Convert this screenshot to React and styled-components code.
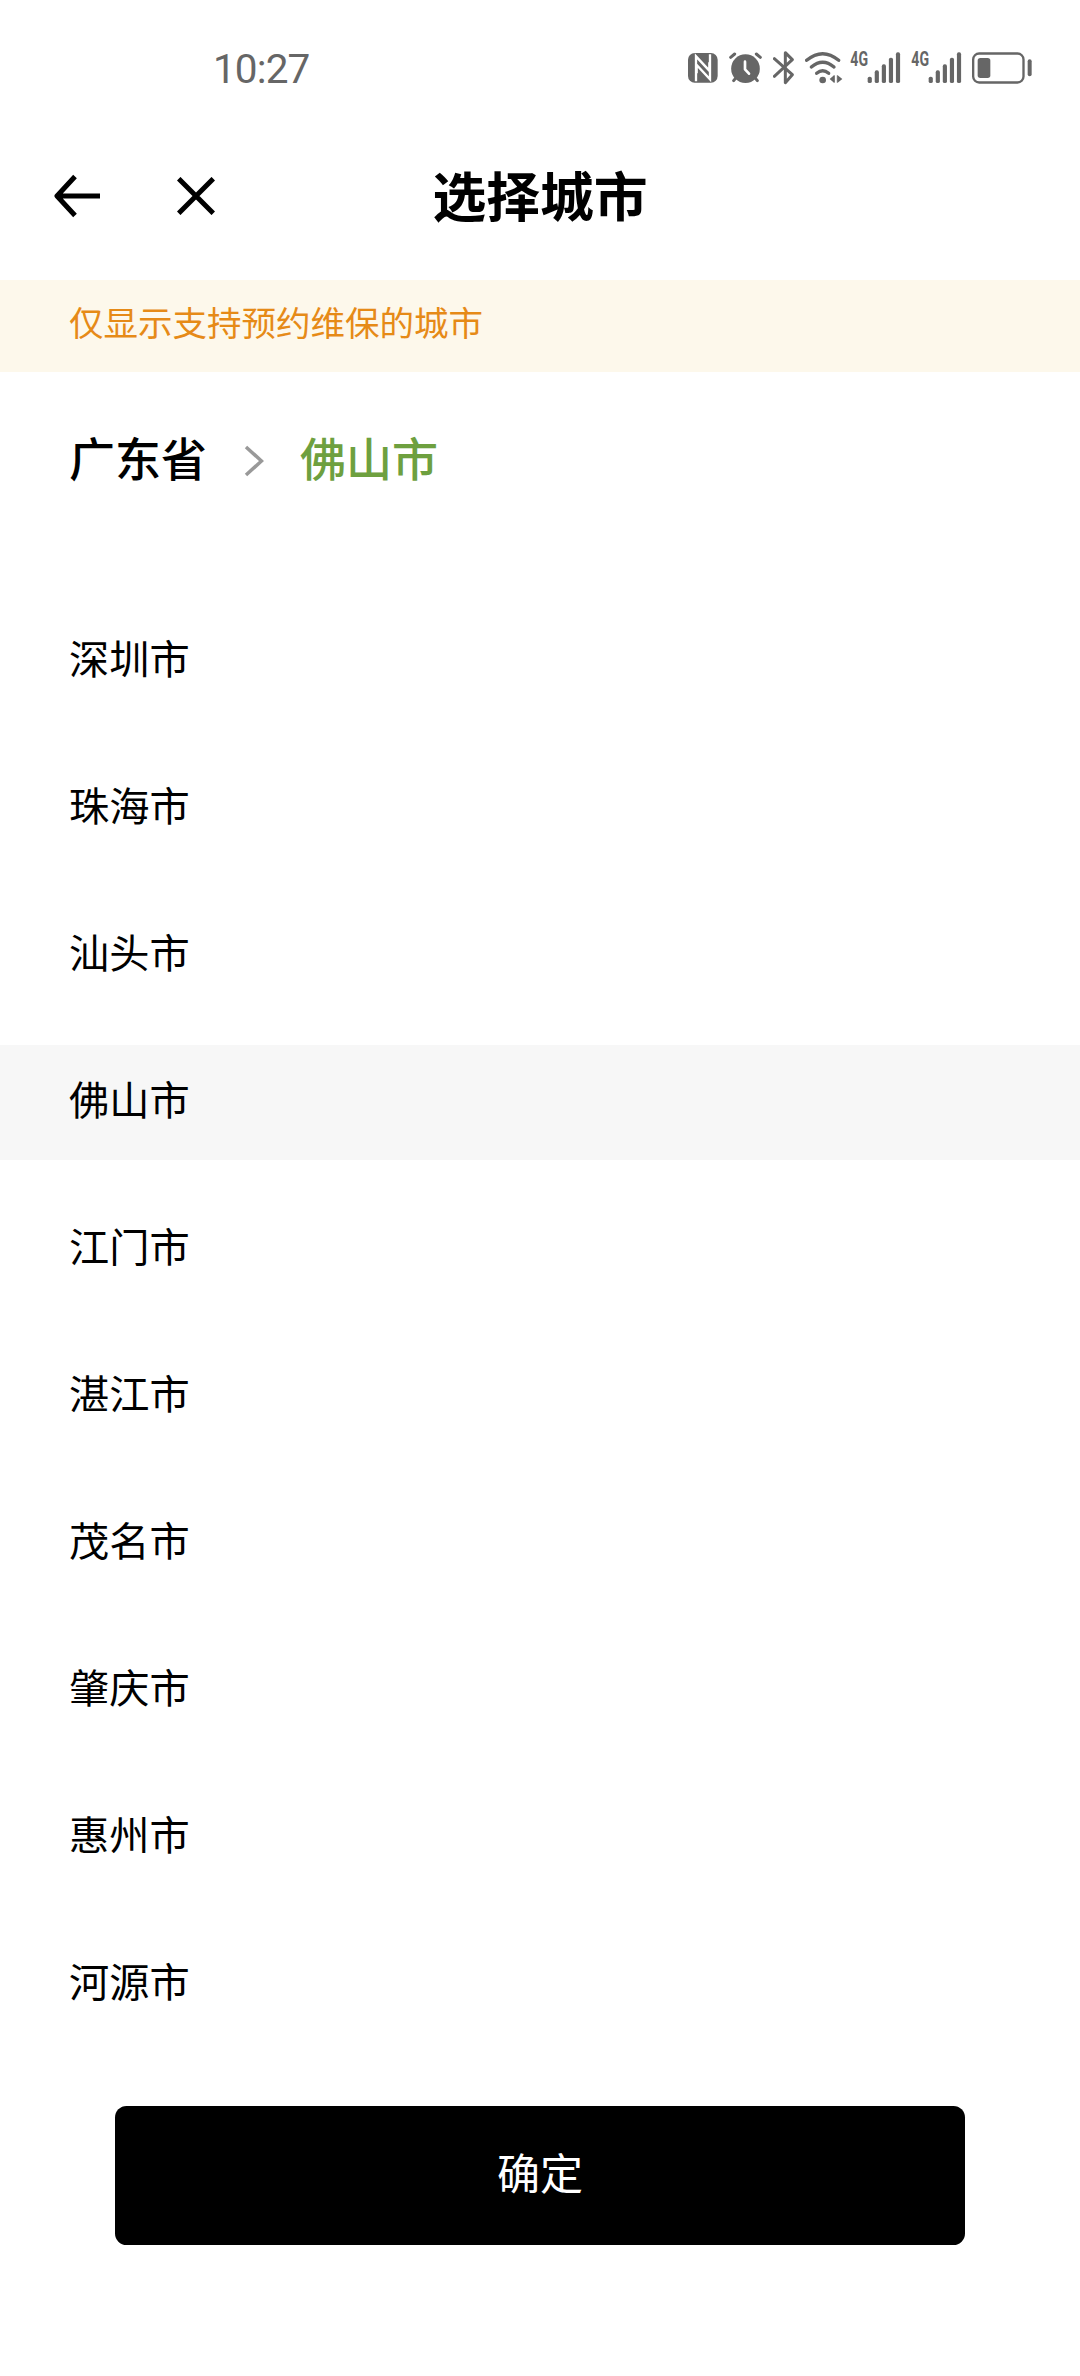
import React from 'react';
import styled, { createGlobalStyle } from 'styled-components';

const Global = createGlobalStyle`
  * { box-sizing: border-box; }
  body {
    margin: 0;
    background: #fff;
    color: #000;
    font-family: Roboto, "Noto Sans CJK SC", sans-serif;
  }
`;

const Screen = styled.div`
  display: flex;
  flex-direction: column;
  width: 1080px;
  height: 2376px;
  overflow: hidden;
  background: #fff;
`;

const StatusBar = styled.header`
  display: flex;
  align-items: center;
  justify-content: space-between;
  height: 136px;
  padding: 0 48px 0 213px;
  color: #666;
`;

const Clock = styled.time`
  padding-top: 2px;
  font: 400 40.5px/44px Roboto, sans-serif;
  letter-spacing: -0.9px;
`;

const StatusIcons = styled.div`
  display: flex;
  align-items: center;
`;

const Glyph = styled.svg`
  display: block;
  flex: none;
  width: ${(p) => p.$w}px;
  height: 40px;
  margin-left: ${(p) => p.$gap || 0}px;
`;

const TitleBar = styled.div`
  display: grid;
  grid-template-columns: 1fr auto 1fr;
  align-items: center;
  height: 144px;
  padding: 0 54px 24px;
`;

const NavButtons = styled.nav`
  display: flex;
  align-items: center;
  gap: 77px;
`;

const IconButton = styled.button`
  display: flex;
  padding: 0;
  border: 0;
  background: none;
  color: #000;
`;

const Title = styled.h1`
  margin: 0;
  padding-top: 6px;
  font-size: 53.8px;
  line-height: 78px;
  font-weight: 700;
`;

const Notice = styled.p`
  margin: 0;
  height: 92px;
  padding: 19px 69px 0;
  background: #fdf8eb;
  color: #e68a17;
  font-size: 34.5px;
  line-height: 50px;
`;

const Breadcrumb = styled.div`
  display: flex;
  align-items: center;
  height: 176px;
  padding: 0 69px;
  font-size: 46px;
  line-height: 66px;
  font-weight: 500;
`;

const Crumb = styled.span`
  color: ${(p) => (p.$active ? '#6ea03f' : '#000')};
`;

const Chevron = styled.svg`
  width: 20px;
  height: 32px;
  margin: 2px 36px 0 37px;
`;

const CityList = styled.ul`
  display: flex;
  flex-direction: column;
  gap: 32px;
  margin: 0;
  padding: 56px 0 0;
  list-style: none;
`;

const City = styled.li`
  height: 115px;
  padding: 0 69px;
  background: ${(p) => (p.$selected ? '#f7f7f7' : 'transparent')};
  font-size: 40.2px;
  line-height: 114px;
`;

const Footer = styled.footer`
  margin-top: auto;
  padding: 0 115px 131px;
`;

const Confirm = styled.button`
  display: block;
  width: 100%;
  height: 139px;
  padding: 0 0 9px;
  border: 0;
  border-radius: 11.5px;
  background: #000;
  color: #fff;
  font: 400 43px/62px "Noto Sans CJK SC", sans-serif;
`;

const cities = ['深圳市', '珠海市', '汕头市', '佛山市', '江门市', '湛江市', '茂名市', '肇庆市', '惠州市', '河源市'];

function Nfc() {
  return (
    <Glyph $w={30} viewBox="0 0 90 120">
      <rect x="0" y="15" width="89" height="89" rx="20" fill="currentColor" />
      <path d="M24 100V25L64 68V43M66 19V94L26 51V76" fill="none" stroke="#fff" strokeWidth="7" />
    </Glyph>
  );
}

function Alarm() {
  return (
    <Glyph $w={33} $gap={11} viewBox="0 0 99 120">
      <g fill="none" stroke="currentColor" strokeLinecap="round" strokeWidth="9">
        <path d="M5 28L17 18M94 28L82 18M14 98L22 88M85 98L77 88" />
      </g>
      <circle cx="49.500" cy="62" r="43" fill="currentColor" />
      <path d="M48 41V64L60 77" fill="none" stroke="#fff" strokeWidth="8" strokeLinecap="round" strokeLinejoin="round" />
    </Glyph>
  );
}

function Bluetooth() {
  return (
    <Glyph $w={21} $gap={11} viewBox="0 0 63 120">
      <path d="M4 32L58 80L37 104V14L58 35L4 85" fill="none" stroke="currentColor" strokeWidth="9" strokeLinecap="round" strokeLinejoin="round" />
    </Glyph>
  );
}

function Wifi() {
  return (
    <Glyph $w={38} $gap={11} viewBox="0 0 114 120">
      <g fill="none" stroke="currentColor" strokeWidth="10" strokeLinecap="round">
        <path d="M5 37Q53 -3 101 37" />
        <path d="M19 57Q53 28 87 57" />
        <path d="M35 76Q53 61 71 76" />
      </g>
      <circle cx="53" cy="96" r="10" fill="currentColor" />
      <path d="M74 93L87 82V104ZM112 93L98 82V104Z" fill="currentColor" />
      <path d="M88 82V104M97 82V104" stroke="currentColor" strokeWidth="3" />
    </Glyph>
  );
}

function Signal({ gap }) {
  const tops = [86, 67, 49, 29, 13];
  return (
    <Glyph $w={51} $gap={gap} viewBox="0 0 153 120">
      <text x="1" y="55" fill="currentColor" fontFamily="Roboto, sans-serif" fontSize="58" fontWeight="700" textLength="53" lengthAdjust="spacingAndGlyphs">4G</text>
      {tops.map((top, i) => (
        <rect key={top} x={53 + i * 21.2} y={top} width="12.500" height={105 - top} rx="5.500" fill="currentColor" />
      ))}
    </Glyph>
  );
}

function Battery() {
  return (
    <Glyph $w={60} $gap={10} viewBox="0 0 180 120">
      <rect x="3.500" y="16.500" width="151" height="87" rx="18" fill="none" stroke="currentColor" strokeWidth="7" />
      <rect x="17" y="30" width="38" height="60" rx="8" fill="currentColor" />
      <rect x="167" y="34" width="12" height="51" rx="6" fill="currentColor" />
    </Glyph>
  );
}

export default function App() {
  return (
    <>
      <Global />
      <Screen>
        <StatusBar>
          <Clock>10:27</Clock>
          <StatusIcons>
            <Nfc />
            <Alarm />
            <Bluetooth />
            <Wifi />
            <Signal gap={7} />
            <Signal gap={10} />
            <Battery />
          </StatusIcons>
        </StatusBar>
        <TitleBar>
          <NavButtons>
            <IconButton aria-label="返回">
              <svg width="46" height="44" viewBox="0 0 46 44" fill="none" stroke="currentColor" strokeWidth="5">
                <path d="M21 2.500L3 22L21 41.500M3 22H46" strokeLinejoin="round" />
              </svg>
            </IconButton>
            <IconButton aria-label="关闭">
              <svg width="38" height="38" viewBox="0 0 38 38" fill="none" stroke="currentColor" strokeWidth="5">
                <path d="M1.700 1.700L36.300 36.300M36.300 1.700L1.700 36.300" />
              </svg>
            </IconButton>
          </NavButtons>
          <Title>选择城市</Title>
        </TitleBar>
        <Notice>仅显示支持预约维保的城市</Notice>
        <Breadcrumb>
          <Crumb>广东省</Crumb>
          <Chevron viewBox="0 0 20 32" fill="none" stroke="#999" strokeWidth="3.500">
            <path d="M2 2L17.500 16L2 30" />
          </Chevron>
          <Crumb $active>佛山市</Crumb>
        </Breadcrumb>
        <CityList>
          {cities.map((name) => (
            <City key={name} $selected={name === '佛山市'}>{name}</City>
          ))}
        </CityList>
        <Footer>
          <Confirm>确定</Confirm>
        </Footer>
      </Screen>
    </>
  );
}
